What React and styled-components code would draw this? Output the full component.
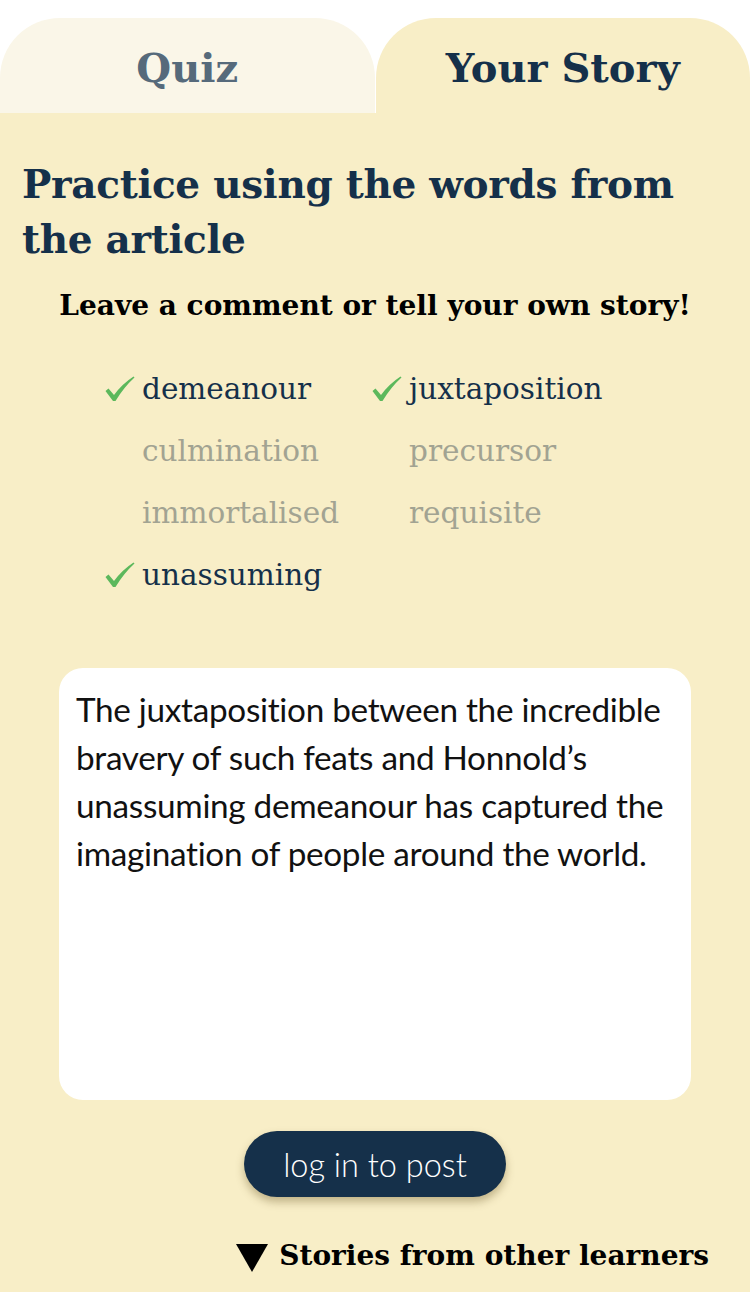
import React from "react";
import styled, { createGlobalStyle } from "styled-components";

const NAVY = "#15304a";
const PANEL = "#f8eec7";
const SERIF = `"DejaVu Serif", "Liberation Serif", serif`;

const Global = createGlobalStyle`
  html, body { margin: 0; padding: 0; background: #fff; }
  body { width: 750px; min-height: 1292px; }
`;

const Page = styled.div`
  padding-top: 18px;
  min-height: 1274px;
  display: flex;
  flex-direction: column;
`;

const Tabs = styled.div`
  display: flex;
  gap: 1px;
  height: 95px;
`;

const Tab = styled.div`
  flex: 1;
  display: flex;
  justify-content: center;
  align-items: center;
  padding-top: 4px;
  border-radius: 60px 60px 0 0;
  background: ${p => (p.active ? PANEL : "#faf6e8")};
  color: ${p => (p.active ? NAVY : "#566a7b")};
  font-family: ${SERIF};
  font-weight: 700;
  font-size: 40px;
`;

const Panel = styled.div`
  flex: 1;
  background: ${PANEL};
  padding: 44px 22px 30px;
  display: flex;
  flex-direction: column;
`;

const Heading = styled.h1`
  margin: 0;
  font-family: ${SERIF};
  font-weight: 700;
  font-size: 39px;
  line-height: 55px;
  letter-spacing: -0.3px;
  color: ${NAVY};
`;

const Sub = styled.h2`
  margin: 22px 0 0;
  text-align: center;
  font-family: ${SERIF};
  font-weight: 700;
  font-size: 28px;
  color: #000;
`;

const Words = styled.div`
  margin: 36px 0 0 82px;
  display: grid;
  grid-template-columns: 267px 1fr;
  grid-auto-rows: 62px;
`;

const Word = styled.div`
  position: relative;
  padding-left: 38px;
  font-family: ${SERIF};
  font-size: 29.5px;
  line-height: 62px;
  color: ${p => (p.done ? NAVY : "#a2a392")};
`;

const Check = styled.svg`
  position: absolute;
  left: 1px;
  top: 18px;
  width: 30px;
  height: 26px;
`;

const Box = styled.div`
  margin: 62px 37px 0;
  height: 432px;
  box-sizing: border-box;
  background: #fff;
  border-radius: 24px;
  padding: 17px 17px;
  font-family: Lato, "Open Sans", sans-serif;
  font-size: 33.3px;
  line-height: 48px;
  letter-spacing: -0.3px;
  color: #111;
`;

const Button = styled.button`
  align-self: center;
  margin-top: 31px;
  width: 262px;
  height: 66px;
  border: none;
  border-radius: 33px;
  background: ${NAVY};
  color: #fff;
  font-family: Lato, sans-serif;
  font-weight: 300;
  font-size: 32.5px;
  box-shadow: 0 5px 8px rgba(90, 70, 20, 0.35);
`;

const More = styled.div`
  align-self: flex-end;
  margin: 42px 19px 0 0;
  display: flex;
  align-items: center;
  gap: 11px;
  font-family: ${SERIF};
  font-weight: 700;
  font-size: 28px;
  color: #000;
`;

const Tri = styled.span`
  width: 0;
  height: 0;
  border-left: 16px solid transparent;
  border-right: 16px solid transparent;
  border-top: 28px solid #000;
  margin-top: 4px;
`;

const words = [
  ["demeanour", true],
  ["juxtaposition", true],
  ["culmination", false],
  ["precursor", false],
  ["immortalised", false],
  ["requisite", false],
  ["unassuming", true]
];

const Tick = () => (
  <Check viewBox="0 0 30 26">
    <path
      d="M0.5 15 L3.5 12.5 L9 19 Q17 8 28.5 0.5 L29.5 1.5 Q19 11 10.5 25 L8 25 Z"
      fill="#5cb85c"
    />
  </Check>
);

export default function App() {
  return (
    <Page>
      <Global />
      <Tabs>
        <Tab>Quiz</Tab>
        <Tab active>Your Story</Tab>
      </Tabs>
      <Panel>
        <Heading>Practice using the words from the article</Heading>
        <Sub>Leave a comment or tell your own story!</Sub>
        <Words>
          {words.map(([w, done]) => (
            <Word key={w} done={done}>
              {done && <Tick />}
              {w}
            </Word>
          ))}
        </Words>
        <Box>
          The juxtaposition between the incredible bravery of such feats and
          Honnold’s unassuming demeanour has captured the imagination of people
          around the world.
        </Box>
        <Button>log in to post</Button>
        <More>
          <Tri />
          Stories from other learners
        </More>
      </Panel>
    </Page>
  );
}
